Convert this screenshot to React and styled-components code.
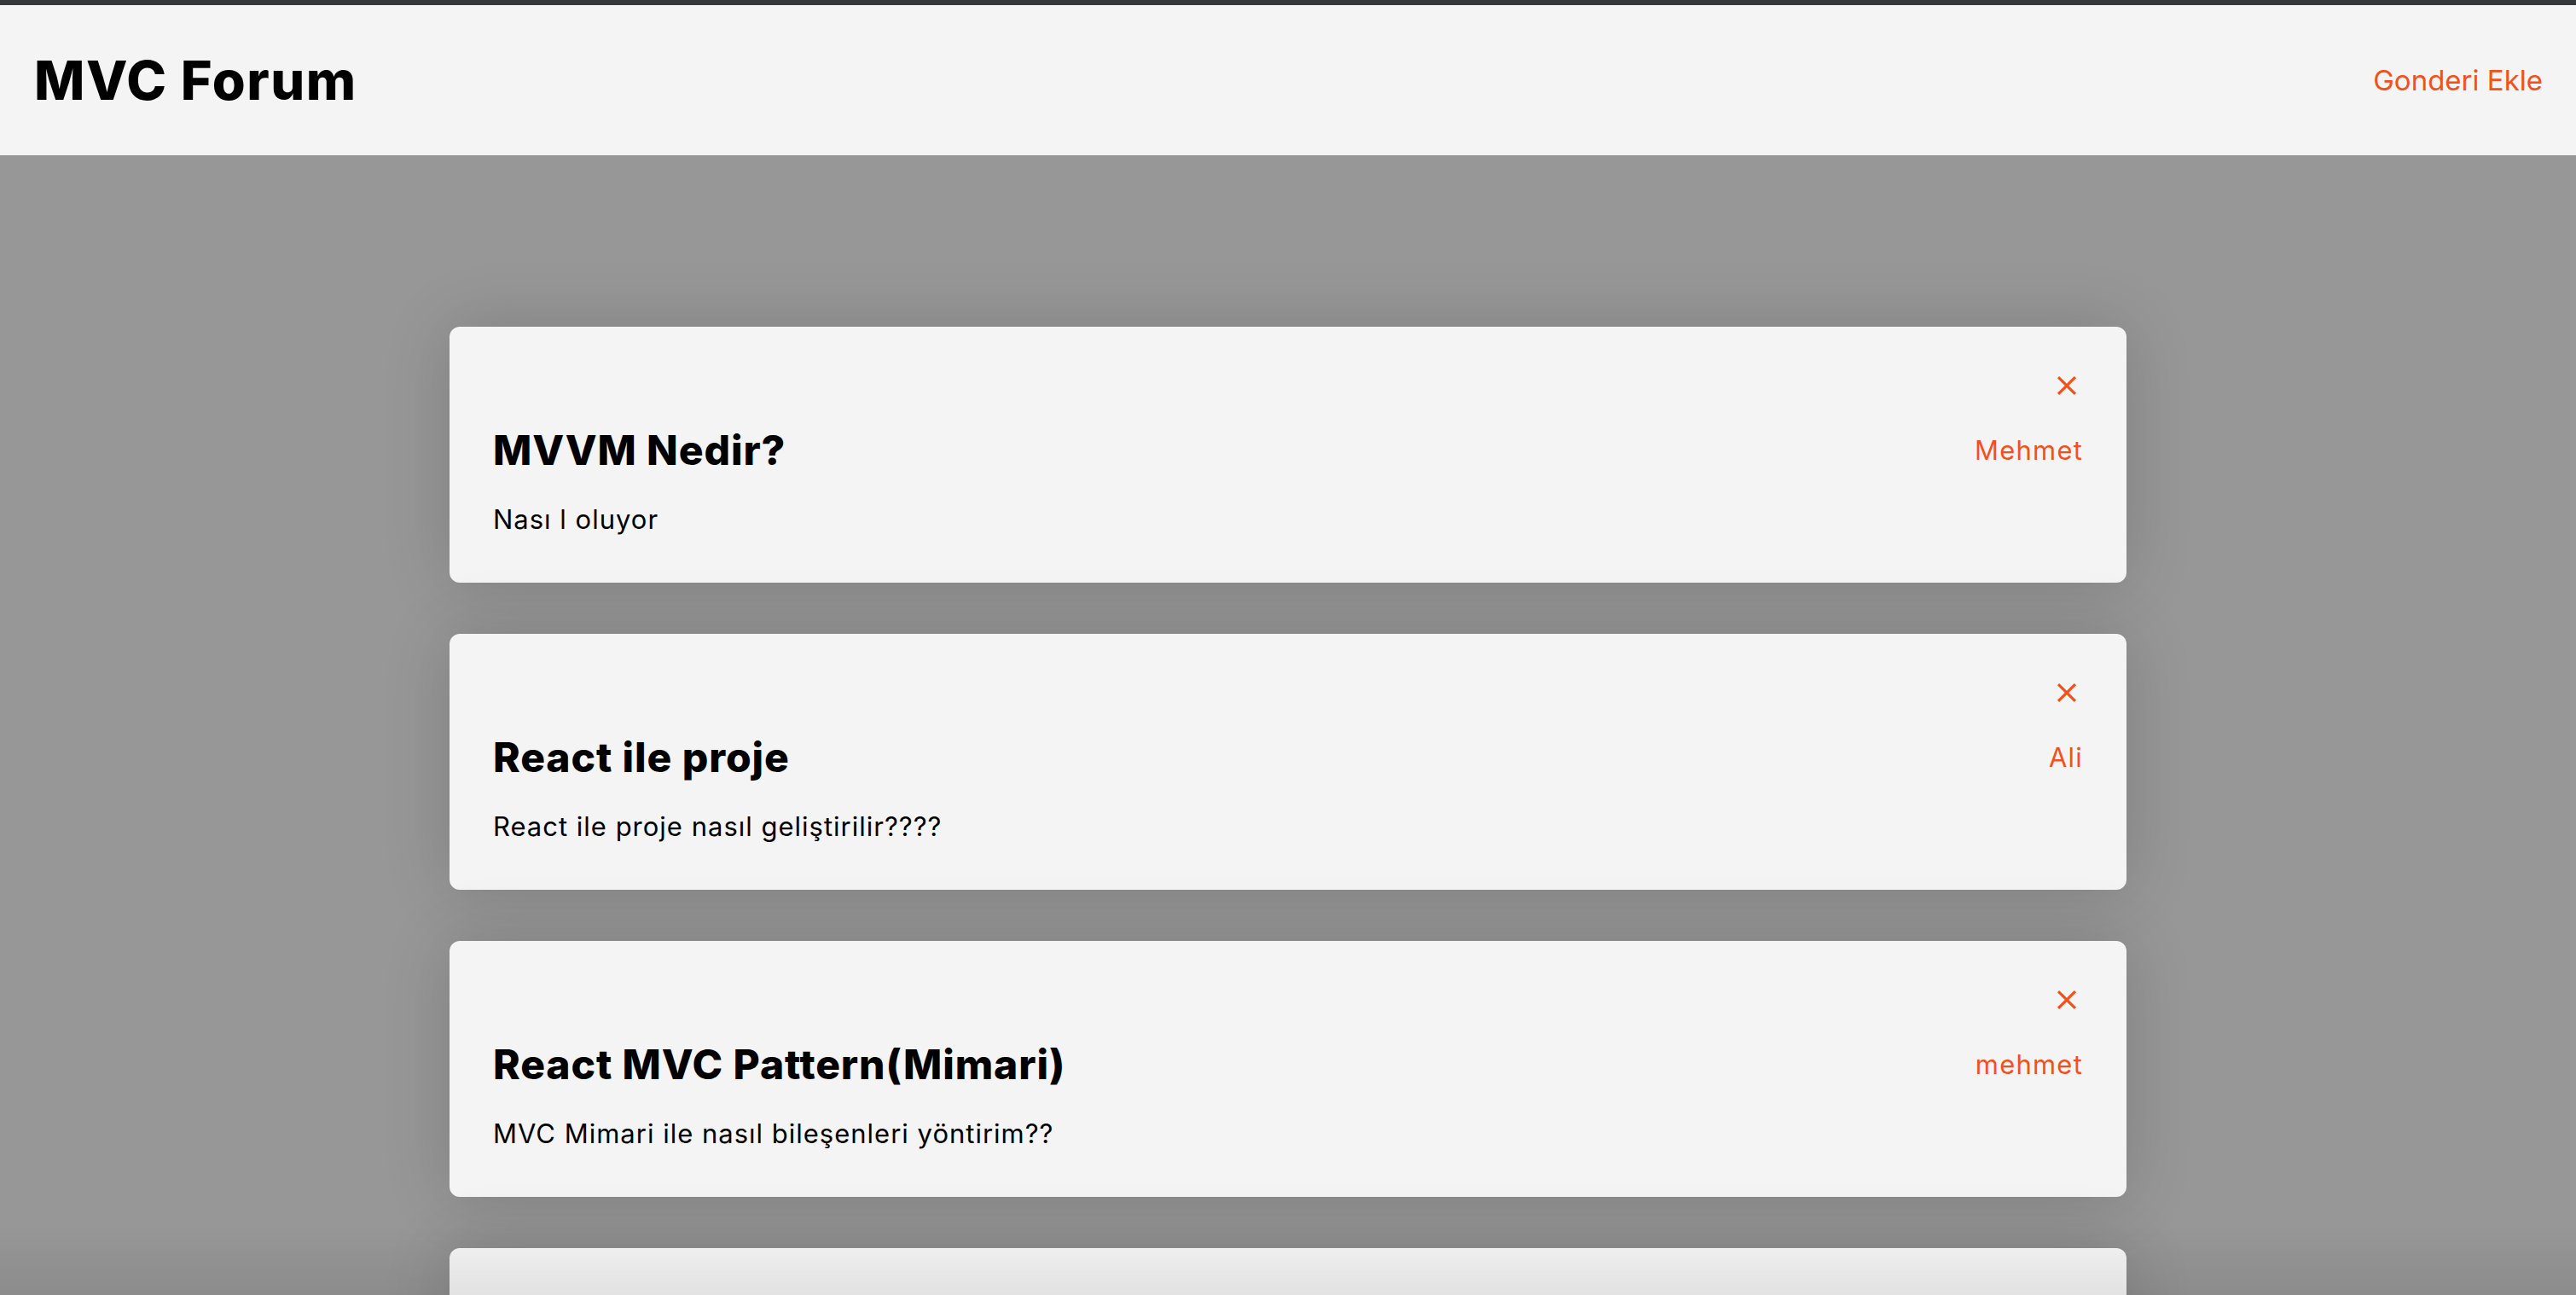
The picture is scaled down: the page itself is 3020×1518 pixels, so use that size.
import styled, { createGlobalStyle } from "styled-components";

const posts = [
  { id: 1, title: "MVVM Nedir?", body: "Nası l oluyor", author: "Mehmet" },
  {
    id: 2,
    title: "React ile proje",
    body: "React ile proje nasıl geliştirilir????",
    author: "Ali",
  },
  {
    id: 3,
    title: "React MVC Pattern(Mimari)",
    body: "MVC Mimari ile nasıl bileşenleri yöntirim??",
    author: "mehmet",
  },
  {
    id: 4,
    title: "Redux Toolkit",
    body: "Store yapısı nasıl kurulur?",
    author: "Ayşe",
  },
];

function CloseIcon() {
  return (
    <svg viewBox="0 0 24 24" width="38" height="38" fill="currentColor">
      <path d="M19 6.41L17.59 5 12 10.59 6.41 5 5 6.41 10.59 12 5 17.59 6.41 19 12 13.41 17.59 19 19 17.59 13.41 12z" />
    </svg>
  );
}

function App() {
  return (
    <>
      <GlobalStyle />
      <Header>
        <Logo>MVC Forum</Logo>
        <NavLink>Gonderi Ekle</NavLink>
      </Header>
      <Main>
        {posts.map((post) => (
          <Card key={post.id}>
            <CardTop>
              <DeleteButton aria-label="Sil">
                <CloseIcon />
              </DeleteButton>
            </CardTop>
            <TitleRow>
              <Title>{post.title}</Title>
              <Author>{post.author}</Author>
            </TitleRow>
            <Body>{post.body}</Body>
          </Card>
        ))}
      </Main>
      <BottomFade />
    </>
  );
}

export default App;

const GlobalStyle = createGlobalStyle`
  * {
    box-sizing: border-box;
  }
  body {
    margin: 0;
    background: #979797;
    font-family: Inter, "Noto Sans", sans-serif;
    overflow: hidden;
  }
`;

const Header = styled.header`
  height: 182px;
  border-top: 6px solid #36373b;
  background: #f4f4f4;
  display: flex;
  align-items: center;
  justify-content: space-between;
  padding: 0 39px 0 40px;
`;

const Logo = styled.h1`
  margin: 0;
  font-size: 63px;
  font-weight: 800;
  letter-spacing: 1.5px;
  color: #000;
`;

const NavLink = styled.a`
  font-size: 33px;
  color: #f4501a;
  cursor: pointer;
`;

const Main = styled.main`
  display: flex;
  flex-direction: column;
  align-items: center;
  gap: 60px;
  padding-top: 201px;
  min-height: calc(100vh - 182px);
`;

const Card = styled.section`
  width: 65.1%;
  background: #f4f4f4;
  border-radius: 12px;
  padding: 50px 51px 50px 51px;
  box-shadow: 0 0 80px rgba(0, 0, 0, 0.16);
`;

const CardTop = styled.div`
  display: flex;
  justify-content: flex-end;
  height: 38px;
`;

const DeleteButton = styled.button`
  border: none;
  background: none;
  padding: 0;
  color: #f4501a;
  cursor: pointer;
  display: flex;
`;

const TitleRow = styled.div`
  display: flex;
  align-items: center;
  justify-content: space-between;
  height: 60px;
  margin-top: 26px;
`;

const Title = styled.h2`
  margin: 0;
  font-size: 48px;
  font-weight: 800;
  letter-spacing: 0.9px;
  color: #000;
`;

const Author = styled.span`
  font-size: 31px;
  letter-spacing: 1.2px;
  color: #f4501a;
`;

const Body = styled.p`
  margin: 27px 0 0;
  font-size: 31px;
  line-height: 49px;
  letter-spacing: 1px;
  color: #000;
`;

const BottomFade = styled.div`
  position: fixed;
  left: 0;
  right: 0;
  bottom: 0;
  height: 80px;
  pointer-events: none;
  background: linear-gradient(rgba(0, 0, 0, 0), rgba(0, 0, 0, 0.07));
`;
